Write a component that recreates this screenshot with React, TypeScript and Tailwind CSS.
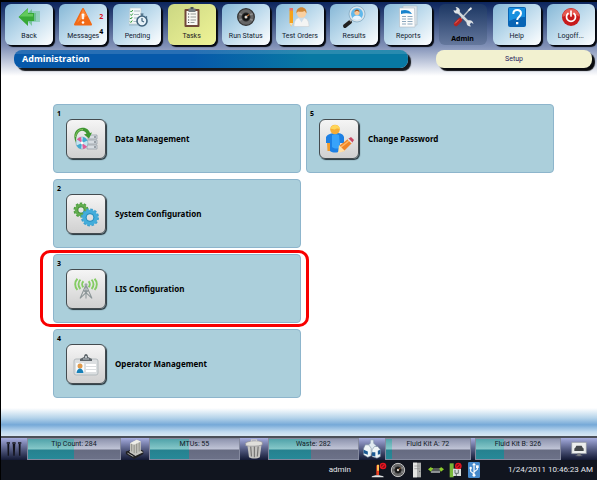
import clsx from 'clsx';
import type { ReactNode } from 'react';

const Icon = ({ className, size = 24, children }: { className?: string; size?: number; children: ReactNode }) => (
  <svg viewBox={`0 0 ${size} ${size}`} className={className} fill="none" aria-hidden="true">
    {children}
  </svg>
);

const BackIcon = () => (
  <Icon className="size-6">
    <path d="M13 6h10v11H13z" fill="#6fc59a" opacity="0.55" />
    <path d="M7 12 15 4v4h4v8h-4v5z" fill="#5fbb80" opacity="0.7" />
    <path d="M1.500 12 11 3v5h6v8h-6v5z" fill="#37a937" />
    <path d="M2.500 11.500 11 4v5h5v2.500z" fill="#62c95c" />
  </Icon>
);

const WarningIcon = () => (
  <Icon className="size-6">
    <path d="M12 4 20 19.500H4z" fill="#f26a16" stroke="#f26a16" strokeWidth="2" strokeLinejoin="round" />
    <path d="M12 4 16 11c-3 1-7 4-10 7z" fill="#ff9447" opacity="0.7" />
    <path d="M11 9h2l-.4 5h-1.200z" fill="#fff" stroke="#fff" strokeWidth="0.800" />
    <circle cx="12" cy="17.500" r="1.300" fill="#fff" />
  </Icon>
);

const PendingIcon = () => (
  <Icon className="size-6">
    <path d="M5 3h11v16H4z" fill="#f4f8f8" stroke="#b9c8ce" strokeWidth="0.600" />
    <path d="M9 6h6M9 9.500h5M9 13h4M8.500 16.500h4" stroke="#a9bcc4" />
    <path d="m5.500 6 .8 1 1.500-2M5.500 9.500l.8 1 1.500-2M5 13l.8 1 1.500-2M5 16.500l.8 1 1.500-2" stroke="#2f9a38" />
    <circle cx="17" cy="16" r="5" fill="#e6f1f8" stroke="#40637c" strokeWidth="1.600" />
    <path d="M17 13v3l2 1M17 11V9.500M15.500 9h3M21 11.500l1 1" stroke="#40637c" strokeWidth="1.200" />
    <path d="M4 20h10" stroke="#8ba4ae" opacity="0.6" />
  </Icon>
);

const TasksIcon = () => (
  <Icon className="size-6">
    <rect x="4.500" y="4" width="15" height="18" rx="1" fill="#704839" />
    <path d="M6.500 6h11v14h-11z" fill="#f8f8f3" />
    <path d="M8.500 3.500h7V7h-7z" fill="#737b80" />
    <path d="M10.500 2h3v2h-3z" fill="#4c5255" />
    <path d="M10.500 9h5.500M10.500 12h5.500M10.500 15h5.500M10.500 17.500h4" stroke="#979b99" />
    <path d="M8 9h1.200M8 12h1.200M8 15h1.200M8 17.500h1.200" stroke="#424242" />
  </Icon>
);

const RotorIcon = ({ className, rim }: { className?: string; rim: string }) => (
  <Icon className={className}>
    <circle cx="12" cy="12" r="10" fill="#666" stroke={rim} strokeWidth="1.500" />
    <path d="m4 8 4 2M20 8l-4 2M4 16l4-2M20 16l-4-2" stroke="#8e8e8e" strokeWidth="2" />
    <circle cx="12" cy="12" r="5" fill="#111" stroke="#3a3a3a" />
    <circle cx="12" cy="12" r="1.800" fill="#ddd6cf" />
    <path d="m13 11 3-2" stroke="#c57536" strokeWidth="1.300" />
  </Icon>
);

const OrdersIcon = () => (
  <Icon className="size-6">
    <path d="M1.500 5H5v13l-1.800 3.500L1.500 18z" fill="#f6a21b" />
    <path d="M1.500 3H5v2.500H1.500z" fill="#e6706d" />
    <path d="M1.500 18H5l-1.800 3.500z" fill="#f8dfb3" />
    <path d="M6 21.500c0-6 2-9 7.500-9s7.500 3 7.500 9z" fill="#f4f4f3" stroke="#c8cbcd" strokeWidth="0.500" />
    <path d="m10.500 12.500 3 5 3-5" fill="#cdddea" />
    <circle cx="13.500" cy="8" r="4.800" fill="#f9d0a1" />
    <path d="M8.500 8.500c-1-8.500 11-8.500 10 0-1-1-1-2-2-2.500-2 1-5 1-6 .5-1 0-1.500 1-2 2z" fill="#cf8636" />
  </Icon>
);

const ResultsIcon = () => (
  <Icon className="size-6">
    <path d="m8 17-5 4" stroke="#212121" strokeWidth="4" strokeLinecap="round" />
    <path d="m11 13-3 3" stroke="#b5b5b5" strokeWidth="2" />
    <circle cx="15" cy="9" r="7" fill="#60b8eb" stroke="#d9e4eb" strokeWidth="2" />
    <circle cx="15" cy="9" r="8" stroke="#6c98b6" strokeWidth="0.600" />
    <circle cx="15" cy="7.500" r="2.600" fill="#f6c596" />
    <path d="M12.500 7.500c0-4 5-4 5 0-1-2-4-2-5 0z" fill="#9b5a2a" />
    <path d="M10.500 13.500c1-4 8-4 9 0-3 2-6 2-9 0z" fill="#e8f5ff" />
  </Icon>
);

const ReportsIcon = () => (
  <Icon className="size-6">
    <path d="M7 1h14v19H7z" fill="#dce5eb" stroke="#adb8c0" strokeWidth="0.600" />
    <path d="M3.500 3h15l.5 19H3.500z" fill="#fbfcfc" stroke="#b0bbc2" strokeWidth="0.600" />
    <path d="M5 5.500c4-1 8-1 11 3.500-4-1-8-1-11 0z" fill="#1682cc" />
    <path d="M6 11.500h4M11.500 11.500h5M6 14h4M11.500 14h5M6 16.500h4M11.500 16.500h5M6 19h4M11.500 19h5" stroke="#8ba7bd" />
  </Icon>
);

const ToolsIcon = () => (
  <Icon className="size-6">
    <path d="M19.500 3.500 9 15" stroke="#b7bec5" strokeWidth="1.500" />
    <path d="m20 2 1 2-3 2-1-1z" fill="#e9edef" />
    <path d="m5 5 14 14" stroke="#d2d8db" strokeWidth="2.500" />
    <path d="M2.500 5c.5 3 2 4 5 3.500L9 6C8.500 3 7 2 4.500 2L6 4.500 5 6zM17 15.500c3-1 5 .5 5.500 3.500L20 17.500 18.500 19l1.500 2.500c-3 0-4.500-1.500-4.500-4z" fill="#dfe4e7" />
    <path d="m9 15-4 4" stroke="#b42423" strokeWidth="4.500" strokeLinecap="round" />
    <path d="m8 14.500-4 4" stroke="#ed7064" />
  </Icon>
);

const HelpIcon = () => (
  <Icon className="size-6">
    <rect x="3" y="2" width="18" height="20" rx="2" fill="#0865b5" />
    <path d="M4 3h16v9c-5 0-9 1-16 4z" fill="#1990df" />
    <path d="M8.300 9c0-2.800 1.700-4 3.900-4s3.800 1.400 3.800 3.600c0 3-3.800 3.200-3.800 6.400" stroke="#fff" strokeWidth="2" />
    <path d="M11 17h2.300v2.300H11z" fill="#fff" />
  </Icon>
);

const PowerIcon = () => (
  <Icon className="size-6">
    <circle cx="12" cy="12" r="9" fill="#c71b1c" />
    <path d="M3.500 12a8.500 8.500 0 0 1 17 0C16 8.500 9 9 3.500 12z" fill="#e65a51" />
    <path d="M9 8.500a4.500 4.500 0 1 0 6 0" stroke="#fff" strokeWidth="1.700" strokeLinecap="round" />
    <path d="M12 6v5" stroke="#fff" strokeWidth="1.700" strokeLinecap="round" />
  </Icon>
);

const DataIcon = () => (
  <Icon className="size-7" size={28}>
    <path d="M16 10h9v4h-9zM15 15h10v4H15zM15 20h10v4H15z" fill="#d8dde2" stroke="#9099a1" strokeWidth="0.700" />
    <path d="M22 12h2M22 17h2M22 22h2" stroke="#5a646c" />
    <path d="M4 18C0 9 4 4 9 3c5-1 8 2 9 5l2-.5-3 6-5-4 2.500-.7C13 6 11 5.500 9 6c-4 1-5 6-5 12z" fill="#3f9632" />
    <path d="M3.500 12C4 7 7 4 11 4.500" stroke="#8ac762" />
    <circle cx="10" cy="18" r="6" fill="#c2e5f0" stroke="#7fa5b4" strokeWidth="0.600" />
    <path d="M10 18 5 14.500A6 6 0 0 1 9 12zM10 18l5 3.500a6 6 0 0 1-4 2.500z" fill="#df5d99" />
    <path d="m10 18-5.500 2.500A6 6 0 0 0 9 24zM10 18l5.500-2.500A6 6 0 0 0 11 12z" fill="#42a9d0" />
    <circle cx="10" cy="18" r="1.400" fill="#fff" />
  </Icon>
);

const GearsIcon = () => (
  <Icon className="size-7" size={28}>
    <circle cx="9" cy="10" r="6.500" stroke="#4f9f43" strokeWidth="2" strokeDasharray="2.500 1.584" />
    <circle cx="9" cy="10" r="4.500" stroke="#62ad4e" strokeWidth="3.500" />
    <circle cx="9" cy="10" r="3.300" stroke="#34762f" strokeWidth="0.600" />
    <circle cx="18" cy="17.500" r="8" stroke="#3b9fce" strokeWidth="2" strokeDasharray="2.600 1.589" />
    <circle cx="18" cy="17.500" r="5.500" stroke="#43addb" strokeWidth="4.500" />
    <circle cx="18" cy="17.500" r="4" stroke="#197aac" strokeWidth="0.600" />
  </Icon>
);

const AntennaIcon = () => (
  <Icon className="size-6" size={28}>
    <path d="M11 5c-2 2-2 5 0 7M7.500 3c-3 3-3 8 0 11M4 2c-3.500 3.500-3.500 9.500 0 13M17 5c2 2 2 5 0 7M20.500 3c3 3 3 8 0 11M24 2c3.500 3.500 3.500 9.500 0 13" stroke="#84cc62" strokeWidth="2.200" />
    <path d="M14 9 7 25M14 9l7 16M14 9v16M11.500 16h5M7 25l9.500-9M21 25l-9.500-9" stroke="#8b9597" strokeWidth="1.200" />
    <circle cx="14" cy="9" r="1.800" fill="#9ea9a9" />
  </Icon>
);

const BadgeIcon = () => (
  <Icon className="size-7" size={28}>
    <rect x="2" y="9" width="24" height="16" rx="2" fill="#dcdfe1" stroke="#b3babd" />
    <path d="M8 11V9l4-2c0-4 4-4 4 0l4 2v2z" fill="#5d656a" />
    <path d="M11 9h6" stroke="#bdc5ca" />
    <circle cx="14" cy="7" r="1" fill="#dce2e5" />
    <path d="M4 13h8v10H4z" fill="#f8fbfc" />
    <circle cx="8" cy="16" r="2.500" fill="#e09a4c" />
    <path d="M4.500 23c.5-6 6.500-6 7 0z" fill="#1680b8" />
    <path d="M14 15h10M14 18h10M14 21h10" stroke="#fff" strokeWidth="1.800" />
  </Icon>
);

const PasswordIcon = () => (
  <Icon className="size-8" size={32}>
    <path d="M3 14c2-3 5-4 10-4s7 1 8 4v6h-4v8c-3 2-7 2-10 0v-8H3z" fill="#1d80e4" />
    <path d="M9 12c2-1 5-1 7 0l1 12c-2 2-5 2-8 0z" fill="#38a3fa" />
    <path d="M4 20h3v8H4.500z" fill="#f29c2b" />
    <circle cx="12" cy="6.500" r="4.800" fill="#f6ac35" />
    <path d="M7.500 6c1-5.500 8.500-5.500 9.500 0-2-1-4-.5-5 .5-1 0-3.500-1.500-4.500-.5z" fill="#ffd65a" />
    <path d="M16 29v-6l9-7 4 4-8 8z" fill="#f18528" />
    <path d="m18 24 9-7" stroke="#ffb866" strokeWidth="1.500" />
    <path d="m15 30 1-8 6 6z" fill="#ffe0a8" />
    <path d="m25 16 3-2 3 3-2 3z" fill="#c84662" />
    <path d="m25 16 4 4" stroke="#e5e5e5" strokeWidth="1.500" />
  </Icon>
);

const TipsIcon = () => (
  <Icon className="h-5 w-4">
    <path d="M2 3h3l-.5 19h-2zM10 3h4l-1 19h-2zM19 3h3l-.5 19h-2z" fill="#12131c" />
    <path d="M1 3h5M9.500 3h5M18 3h5" stroke="#303342" strokeWidth="3" />
  </Icon>
);

const TrayIcon = () => (
  <Icon className="size-5">
    <path d="m1 18 10 6 11-6v-4l-8-3-13 4z" fill="#1f1f21" />
    <path d="m6 5 8-4 5 2v11l3 2-9 4-7-4z" fill="#c4c3bd" />
    <path d="M8 5v10M11 6v11M14 5v12M17 4v11" stroke="#85857f" />
    <path d="m6 5 8-4 5 2-8 4z" fill="#eeeee9" />
    <path d="m3 17 7 4M5 15l8 5" stroke="#c9c9c6" />
  </Icon>
);

const TrashIcon = () => (
  <Icon className="size-5">
    <path d="M4 7h17l-2 15c-3 2-10 2-13 0z" fill="#c5c4c1" />
    <path d="m8 9 1 12M12.500 9v13M17 9l-1 12" stroke="#787776" strokeWidth="1.500" />
    <path d="M2 5c3-3 16-4 20-1v3c-5 2-15 2-20 1z" fill="#e0dfdb" stroke="#87878a" strokeWidth="0.700" />
    <path d="M9 3V1h6v2" stroke="#ccc" strokeWidth="1.500" />
  </Icon>
);

const BottlesIcon = () => (
  <Icon className="size-5">
    <path d="M10 1h4v4l3 3v9H7V8l3-3z" fill="#e0eaf0" stroke="#7f96ab" strokeWidth="0.700" />
    <path d="M4 7h4l3 4v9l-4 2-5-3v-8zM15 9h4l3 4v8l-4 2-6-2v-8z" fill="#eff5f7" stroke="#788da0" strokeWidth="0.700" />
    <path d="m2 13 5 2v4l-5-2zM12 16h4v5l-4-1zM19 14l3-1v5l-3 1z" fill="#1c5993" />
  </Icon>
);

const PrinterIcon = () => (
  <Icon className="size-4">
    <path d="M1 2h22v17H1z" fill="#eceeed" stroke="#8b9299" />
    <path d="M5 11h14v4H5zM8 7h8l2 4H6z" fill="#44484b" />
    <path d="M10 19h4v3h-4zM7 22h10" fill="#7d8184" stroke="#7d8184" />
  </Icon>
);

const BlockedMark = ({ x }: { x: number }) => (
  <>
    <circle cx={x} cy="6" r="4" fill="#7c0c12" stroke="#e31622" strokeWidth="2" />
    <path d={`m${x - 3} 9 6-6`} stroke="#e31622" strokeWidth="2" />
  </>
);

const LampIcon = () => (
  <Icon className="size-4">
    <path d="M8 5h4v15H8z" fill="#ed4023" />
    <path d="M9 4h3v9H9z" fill="#ffc04f" />
    <path d="M1 22c2-3 15-3 18 0v1H1z" fill="#e3e5e6" />
    <BlockedMark x={18} />
  </Icon>
);

const TowerIcon = () => (
  <Icon className="size-4">
    <path d="M6 1h12v22H6z" fill="#a9abab" />
    <path d="M6 1h6v22H6z" fill="#e3e4e3" />
    <path d="M8 6h8M8 10h8" stroke="#8b8d8d" />
    <circle cx="16" cy="14" r="1" fill="#5b5f60" />
  </Icon>
);

const LinkIcon = () => (
  <Icon className="size-4">
    <path d="m0 11 5-4v2h3v4H5v2zM24 11l-5-4v2h-3v4h3v2z" fill="#8ccb2b" />
    <path d="m7 11 2-2h8l1 5H5z" fill="#55595a" />
    <path d="M5 14h13v2H4z" fill="#b4b8b8" />
  </Icon>
);

const ServerOffIcon = () => (
  <Icon className="size-4">
    <path d="M4 2h6v21H4z" fill="#79b83a" />
    <path d="M9 10h12v11H9z" fill="#d8dedc" />
    <path d="M12 12v5h5v-5M14 17v4" stroke="#65716f" strokeWidth="1.500" />
    <BlockedMark x={17} />
  </Icon>
);

const UsbIcon = () => (
  <Icon className="size-4">
    <rect x="3" width="18" height="24" rx="2" fill="#4589cc" />
    <path d="M12 21V3M12 18l-5-4v-4M12 15l5-4V7" stroke="#fff" strokeWidth="1.700" />
    <path d="m9 5 3-4 3 4z" fill="#fff" />
    <circle cx="12" cy="20" r="2.200" fill="#fff" />
    <circle cx="7" cy="9" r="1.800" fill="#fff" />
    <path d="M15 5h4v4h-4z" fill="#fff" />
  </Icon>
);

const navItems = [
  { label: 'Back', icon: <BackIcon /> },
  { label: 'Messages', icon: <WarningIcon />, counts: ['2', '4'] },
  { label: 'Pending', icon: <PendingIcon /> },
  { label: 'Tasks', icon: <TasksIcon />, highlighted: true },
  { label: 'Run Status', icon: <RotorIcon className="size-5" rim="#333" /> },
  { label: 'Test Orders', icon: <OrdersIcon /> },
  { label: 'Results', icon: <ResultsIcon /> },
  { label: 'Reports', icon: <ReportsIcon /> },
  { label: 'Admin', icon: <ToolsIcon />, active: true },
  { label: 'Help', icon: <HelpIcon /> },
  { label: 'Logoff...', icon: <PowerIcon /> },
];

const menuItems = [
  { label: 'Data Management', icon: <DataIcon /> },
  { label: 'System Configuration', icon: <GearsIcon /> },
  { label: 'LIS Configuration', icon: <AntennaIcon />, marked: true },
  { label: 'Operator Management', icon: <BadgeIcon /> },
  { label: 'Change Password', icon: <PasswordIcon /> },
];

const NavButton = ({ item }: { item: (typeof navItems)[number] }) => (
  <button
    type="button"
    className={clsx(
      'relative flex h-[41px] w-12 flex-col items-center rounded-md text-[7px] leading-3 whitespace-nowrap',
      item.active &&
        "justify-between bg-linear-to-b from-[#1c3763] to-[#65789d] font-['Noto_Sans',sans-serif] font-bold text-black",
      item.highlighted && 'bg-linear-to-br from-[#cbd783] to-[#f0f497] text-[#222] shadow-[2px_2px_1px_#05080f]',
      !item.active &&
        !item.highlighted &&
        'bg-linear-to-br from-[#85b7d6] via-[#c0dced] to-white text-[#102030] shadow-[2px_2px_1px_#05080f]',
    )}
  >
    <span className="flex h-[26px] items-center">{item.icon}</span>
    {item.label}
    {item.counts && (
      <span className="absolute top-[9px] right-1 flex flex-col gap-[5px] font-['Noto_Sans',sans-serif] text-[7px] font-bold text-black">
        <span className="leading-2 text-[#d80d20]">{item.counts[0]}</span>
        <span className="leading-3">{item.counts[1]}</span>
      </span>
    )}
  </button>
);

const MenuCard = ({ item, position }: { item: (typeof menuItems)[number]; position: number }) => (
  <div className="relative">
    <button
      type="button"
      className="flex h-[69px] w-full rounded-sm border border-[#8db5cc] bg-[#abcfdb] text-left font-['Noto_Sans',sans-serif] font-bold text-black"
    >
      <span className="w-3 pt-[3px] pl-[3px] text-[7px] leading-3">{position}</span>
      <span className="mt-[14px] flex size-10 items-center justify-center rounded-md border border-[#444b4f] bg-linear-to-b from-[#f5f5f5] to-[#d0d0d0] shadow-[1px_1px_1px_#26343b]">
        {item.icon}
      </span>
      <span className="mt-[26px] ml-[9px] text-[8px] leading-4">{item.label}</span>
    </button>
    {item.marked && (
      <span className="pointer-events-none absolute -top-1 -right-2 -bottom-1 -left-[13px] rounded-[10px] border-3 border-[#f80000]" />
    )}
  </div>
);

const Gauge = ({ label, percent, className }: { label: string; percent: number; className: string }) => (
  <div
    role="meter"
    aria-label={label}
    aria-valuenow={percent}
    className={clsx(
      'relative h-[22px] border border-[#858a9f] bg-[linear-gradient(#8f95af_0%,#c0c4d6_50%,#666b81_55%,#6c7188_100%)] text-center text-[7px] leading-[10px] whitespace-nowrap text-[#111a26]',
      className,
    )}
  >
    <div
      className="absolute inset-y-0 left-0 bg-[linear-gradient(#51a3aa_0%,#86c8c9_50%,#26818f_55%,#278998_100%)]"
      style={{ width: `${percent}%` }}
    />
    <span className="relative">{label}</span>
  </div>
);

const GaugeIcon = ({ children, className }: { children: ReactNode; className: string }) => (
  <span className={clsx('flex shrink-0 items-center justify-center', className)}>{children}</span>
);

export default function App() {
  return (
    <div className="flex min-h-screen flex-col border-t-2 border-l border-black bg-white font-[Roboto,'Open_Sans',sans-serif]">
      <header className="bg-linear-to-b from-[#0b245c] via-[#8191b7] via-60% to-white pb-2">
        <nav className="flex justify-between pt-0.5 pr-0.5 pl-1">
          {navItems.map((item) => (
            <NavButton key={item.label} item={item} />
          ))}
        </nav>
        <div className="flex gap-7 pt-[5px] pr-[5px] pl-[13px]">
          <h1 className="flex-[386] rounded-lg bg-[linear-gradient(#ffffff22_4px,transparent_4px),linear-gradient(90deg,#0759aa_0%,#0759aa_45%,#0879a3_75%,#0879a3_100%)] pl-2 font-['Noto_Sans',sans-serif] text-[9px] leading-[18px] font-bold text-white shadow-[3px_3px_1px_#15181d]">
            Administration
          </h1>
          <div className="flex-[156] rounded-lg bg-[#f2f1d0] text-center text-[7px] leading-[18px] text-[#25235f] shadow-[3px_3px_1px_#090b0f]">
            Setup
          </div>
        </div>
      </header>

      <main className="grow pt-7 pr-[43px] pb-2 pl-[52px]">
        <div className="grid grid-flow-col grid-cols-2 grid-rows-4 gap-x-[5px] gap-y-[6px]">
          {menuItems.map((item, index) => (
            <MenuCard key={item.label} item={item} position={index + 1} />
          ))}
        </div>
      </main>

      <footer>
        <div className="h-7 bg-[linear-gradient(#fff_0%,#b6d4ea_35%,#76a9d8_60%,#c0daef_85%,#d8e8f4_100%)]" />
        <div className="flex border-t-2 border-[#4b5059] bg-linear-to-b from-[#a6addf] to-[#141a35]">
          <GaugeIcon className="w-[26px]">
            <TipsIcon />
          </GaugeIcon>
          <Gauge label="Tip Count: 284" percent={50} className="flex-[94]" />
          <GaugeIcon className="w-7">
            <TrayIcon />
          </GaugeIcon>
          <Gauge label="MTUs: 55" percent={44} className="flex-[91]" />
          <GaugeIcon className="w-7">
            <TrashIcon />
          </GaugeIcon>
          <Gauge label="Waste: 282" percent={47} className="flex-[91]" />
          <GaugeIcon className="w-[26px]">
            <BottlesIcon />
          </GaugeIcon>
          <Gauge label="Fluid Kit A: 72" percent={7} className="mr-1 flex-[86]" />
          <Gauge label="Fluid Kit B: 326" percent={33} className="flex-[86]" />
          <GaugeIcon className="w-9">
            <PrinterIcon />
          </GaugeIcon>
        </div>
        <div className="flex h-5 items-center justify-end bg-[#11151f] pr-1 text-[8px] leading-5 text-[#e4e7ec]">
          <span className="pr-5">admin</span>
          <span className="flex gap-[3px] pr-[26px]">
            <LampIcon />
            <RotorIcon className="size-4" rim="#c5c5c5" />
            <TowerIcon />
            <LinkIcon />
            <ServerOffIcon />
            <UsbIcon />
          </span>
          <time>1/24/2011 10:46:23 AM</time>
        </div>
      </footer>
    </div>
  );
}
